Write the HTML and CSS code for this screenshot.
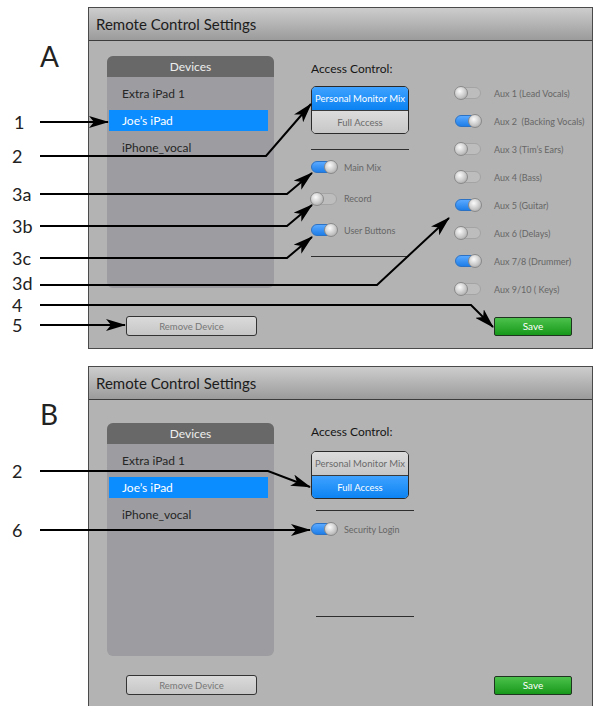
FILE: index.html
```html
<!DOCTYPE html>
<html lang="en">
<head>
    <meta charset="UTF-8">
    <title>Remote Control Settings</title>
    <link rel="stylesheet" href="styles.css">
</head>
<body>
    <div class="page">
        <section class="panel panel-a">
            <header class="panel-title">Remote Control Settings</header>
            <div class="panel-body">
                <div class="top-row">
                    <div class="devices">
                        <div class="devices-head">Devices</div>
                        <ul class="device-list">
                            <li>Extra iPad 1</li>
                            <li class="selected">Joe’s iPad</li>
                            <li>iPhone_vocal</li>
                        </ul>
                    </div>
                    <div class="access">
                        <div class="access-label">Access Control:</div>
                        <div class="segmented">
                            <div class="seg active">Personal Monitor Mix</div>
                            <div class="seg">Full Access</div>
                        </div>
                        <hr class="rule">
                        <div class="toggle-list">
                            <div class="toggle-row"><span class="toggle on"></span>Main Mix</div>
                            <div class="toggle-row"><span class="toggle"></span>Record</div>
                            <div class="toggle-row"><span class="toggle on"></span>User Buttons</div>
                        </div>
                        <hr class="rule rule-end">
                    </div>
                    <div class="aux-list">
                        <div class="toggle-row"><span class="toggle"></span>Aux 1 (Lead Vocals)</div>
                        <div class="toggle-row"><span class="toggle on"></span>Aux 2&nbsp; (Backing Vocals)</div>
                        <div class="toggle-row"><span class="toggle"></span>Aux 3 (Tim’s Ears)</div>
                        <div class="toggle-row"><span class="toggle"></span>Aux 4 (Bass)</div>
                        <div class="toggle-row"><span class="toggle on"></span>Aux 5 (Guitar)</div>
                        <div class="toggle-row"><span class="toggle"></span>Aux 6 (Delays)</div>
                        <div class="toggle-row"><span class="toggle on"></span>Aux 7/8 (Drummer)</div>
                        <div class="toggle-row"><span class="toggle"></span>Aux 9/10 ( Keys)</div>
                    </div>
                </div>
                <div class="bottom-row">
                    <button class="btn-remove">Remove Device</button>
                    <button class="btn-save">Save</button>
                </div>
            </div>
        </section>

        <section class="panel panel-b">
            <header class="panel-title">Remote Control Settings</header>
            <div class="panel-body">
                <div class="top-row">
                    <div class="devices">
                        <div class="devices-head">Devices</div>
                        <ul class="device-list">
                            <li>Extra iPad 1</li>
                            <li class="selected">Joe’s iPad</li>
                            <li>iPhone_vocal</li>
                        </ul>
                    </div>
                    <div class="access">
                        <div class="access-label">Access Control:</div>
                        <div class="segmented">
                            <div class="seg">Personal Monitor Mix</div>
                            <div class="seg active">Full Access</div>
                        </div>
                        <hr class="rule">
                        <div class="toggle-list">
                            <div class="toggle-row"><span class="toggle on"></span>Security Login</div>
                        </div>
                        <hr class="rule rule-end">
                    </div>
                </div>
                <div class="bottom-row">
                    <button class="btn-remove">Remove Device</button>
                    <button class="btn-save">Save</button>
                </div>
            </div>
        </section>

        <!-- callout labels and arrows -->
        <svg class="callouts" width="597" height="706" viewBox="0 0 597 706">
            <defs>
                <marker id="head" markerUnits="userSpaceOnUse" markerWidth="20" markerHeight="12" refX="19" refY="6" orient="auto">
                    <path d="M0,0 L20,6 L0,12 L5,6 Z" fill="#000"/>
                </marker>
            </defs>
            <text class="letter" x="40" y="67">A</text>
            <text class="letter" x="40" y="425">B</text>

            <text class="num" x="14" y="129">1</text>
            <text class="num" x="12" y="163">2</text>
            <text class="num" x="12" y="201">3a</text>
            <text class="num" x="12" y="233">3b</text>
            <text class="num" x="12" y="265">3c</text>
            <text class="num" x="12" y="290">3d</text>
            <text class="num" x="12" y="312">4</text>
            <text class="num" x="12" y="332">5</text>
            <text class="num" x="12" y="478">2</text>
            <text class="num" x="12" y="537">6</text>

            <g class="arrows">
                <path d="M40,122 L108,122"/>
                <path d="M40,156 L266,156 L311,104"/>
                <path d="M40,194 L287,194 L312,173"/>
                <path d="M40,226 L287,226 L312,205"/>
                <path d="M40,258 L287,258 L312,237"/>
                <path d="M40,285 L377,285 L449,218"/>
                <path d="M40,305 L471,305 L493,327"/>
                <path d="M40,325 L125,325"/>
                <path d="M40,471 L268,471 L310,487"/>
                <path d="M40,530 L310,530"/>
            </g>
        </svg>
    </div>
</body>
</html>
```

FILE: styles.css
```css
body {
    margin: 0;
    background-color: #fff;
    font-family: Lato, "Open Sans", sans-serif;
}

.page {
    position: relative;
    width: 597px;
    height: 706px;
    overflow: hidden;
}

.panel {
    box-sizing: border-box;
    width: 505px;
    margin-left: 88px;
    border: 1px solid #4a4a4a;
    background-color: #b3b3b3;
}

.panel-a {
    margin-top: 7px;
    height: 342px;
}

.panel-b {
    margin-top: 17px;
    height: 360px;
}

.panel-title {
    height: 32px;
    line-height: 32px;
    padding-left: 7px;
    border-bottom: 1px solid #3c3c3c;
    background: linear-gradient(#cdcdcd, #9b9b9b);
    font-size: 15px;
    color: #1c1c1c;
}

.panel-body {
    padding: 15px 20px 0 18px;
}

.panel-b .panel-body {
    padding-top: 23px;
}

.top-row {
    display: flex;
    align-items: flex-start;
    height: 232px;
}

.panel-b .top-row {
    height: 233px;
}

.top-row > div {
    flex-shrink: 0;
}

/* devices list */
.devices {
    width: 167px;
    height: 100%;
    border-radius: 6px;
    overflow: hidden;
    background-color: #9d9da1;
}

.devices-head {
    height: 21px;
    line-height: 21px;
    text-align: center;
    font-size: 12px;
    color: #eee;
    background-color: #686868;
}

.device-list {
    list-style: none;
    margin: 0;
    padding: 6px 6px 0 2px;
}

.device-list li {
    height: 21px;
    line-height: 21px;
    padding-left: 13px;
    margin-bottom: 6px;
    font-size: 12px;
    color: #262626;
}

.device-list li.selected {
    background-color: #0b8cff;
    color: #fff;
}

/* access control */
.access {
    width: 98px;
    margin-left: 37px;
}

.access-label {
    margin-top: 5px;
    line-height: 16px;
    font-size: 12px;
    color: #151515;
}

.panel-b .access-label {
    margin-top: 1px;
}

.segmented {
    box-sizing: border-box;
    height: 48px;
    margin-top: 9px;
    border: 1px solid #2a2a2a;
    border-radius: 5px;
    overflow: hidden;
}

.panel-b .segmented {
    margin-top: 11px;
}

.seg {
    height: 23px;
    line-height: 23px;
    text-align: center;
    font-size: 9.5px;
    color: #6a6a6a;
    background: linear-gradient(#dcdcdc, #c6c6c6);
}

.seg:first-child {
    border-bottom: 1px solid #3a3a3a;
}

.seg.active {
    color: #fff;
    background: linear-gradient(#3fa2ff, #0a82f2);
}

.rule {
    width: 98px;
    margin: 15px 0 0;
    border: 0;
    border-top: 1px solid #2e2e2e;
}

.panel-b .rule {
    margin-top: 11px;
    margin-left: 5px;
}

.toggle-list {
    display: flex;
    flex-direction: column;
    gap: 11.5px;
    margin-top: 7px;
}

.panel-b .toggle-list {
    margin-top: 8px;
}

.rule-end {
    margin-top: 16px;
}

.panel-b .rule-end {
    margin-top: 77px;
}

.toggle-row {
    display: flex;
    align-items: center;
    gap: 7px;
    height: 20px;
    font-size: 9px;
    color: #666;
    white-space: nowrap;
}

/* aux column */
.aux-list {
    display: flex;
    flex-direction: column;
    gap: 8px;
    margin-top: 27px;
    margin-left: 46px;
}

.aux-list .toggle-row {
    gap: 13px;
}

/* toggle switch */
.toggle {
    position: relative;
    box-sizing: border-box;
    flex-shrink: 0;
    width: 26px;
    height: 12px;
    border-radius: 6px;
    border: 1px solid #a4a4a4;
    background-color: #bdbdbd;
}

.toggle.on {
    border-color: #2c72c4;
    background: linear-gradient(#5aa9ff, #1e7ee8);
}

.toggle::after {
    content: "";
    position: absolute;
    top: -2px;
    left: -2px;
    box-sizing: border-box;
    width: 14px;
    height: 14px;
    border-radius: 50%;
    border: 1px solid #8a8a8a;
    background: radial-gradient(circle at 40% 35%, #fbfbfb, #c4c4c4 60%, #9a9a9a);
}

.toggle.on::after {
    left: auto;
    right: -2px;
}

/* buttons */
.bottom-row {
    display: flex;
    justify-content: space-between;
    align-items: center;
    margin-top: 28px;
}

.panel-b .bottom-row {
    margin-top: 19px;
}

.btn-remove {
    width: 131px;
    height: 20px;
    margin-left: 19px;
    padding: 0;
    border: 1px solid #333;
    border-radius: 3px;
    background: linear-gradient(#dadada, #c6c6c6);
    font-family: inherit;
    font-size: 9.5px;
    color: #777;
}

.btn-save {
    width: 78px;
    height: 19px;
    padding: 0;
    border: 1px solid #1f351f;
    border-radius: 2px;
    background: linear-gradient(#4cc24c, #17981a);
    font-family: inherit;
    font-size: 10px;
    color: #fff;
}

/* callouts */
.callouts {
    position: absolute;
    top: 0;
    left: 0;
    pointer-events: none;
}

.callouts text {
    font-family: Lato, "Open Sans", sans-serif;
    fill: #222;
}

.callouts .letter {
    font-size: 28px;
}

.callouts .num {
    font-size: 18px;
}

.arrows path {
    fill: none;
    stroke: #000;
    stroke-width: 2;
    marker-end: url(#head);
}
```
